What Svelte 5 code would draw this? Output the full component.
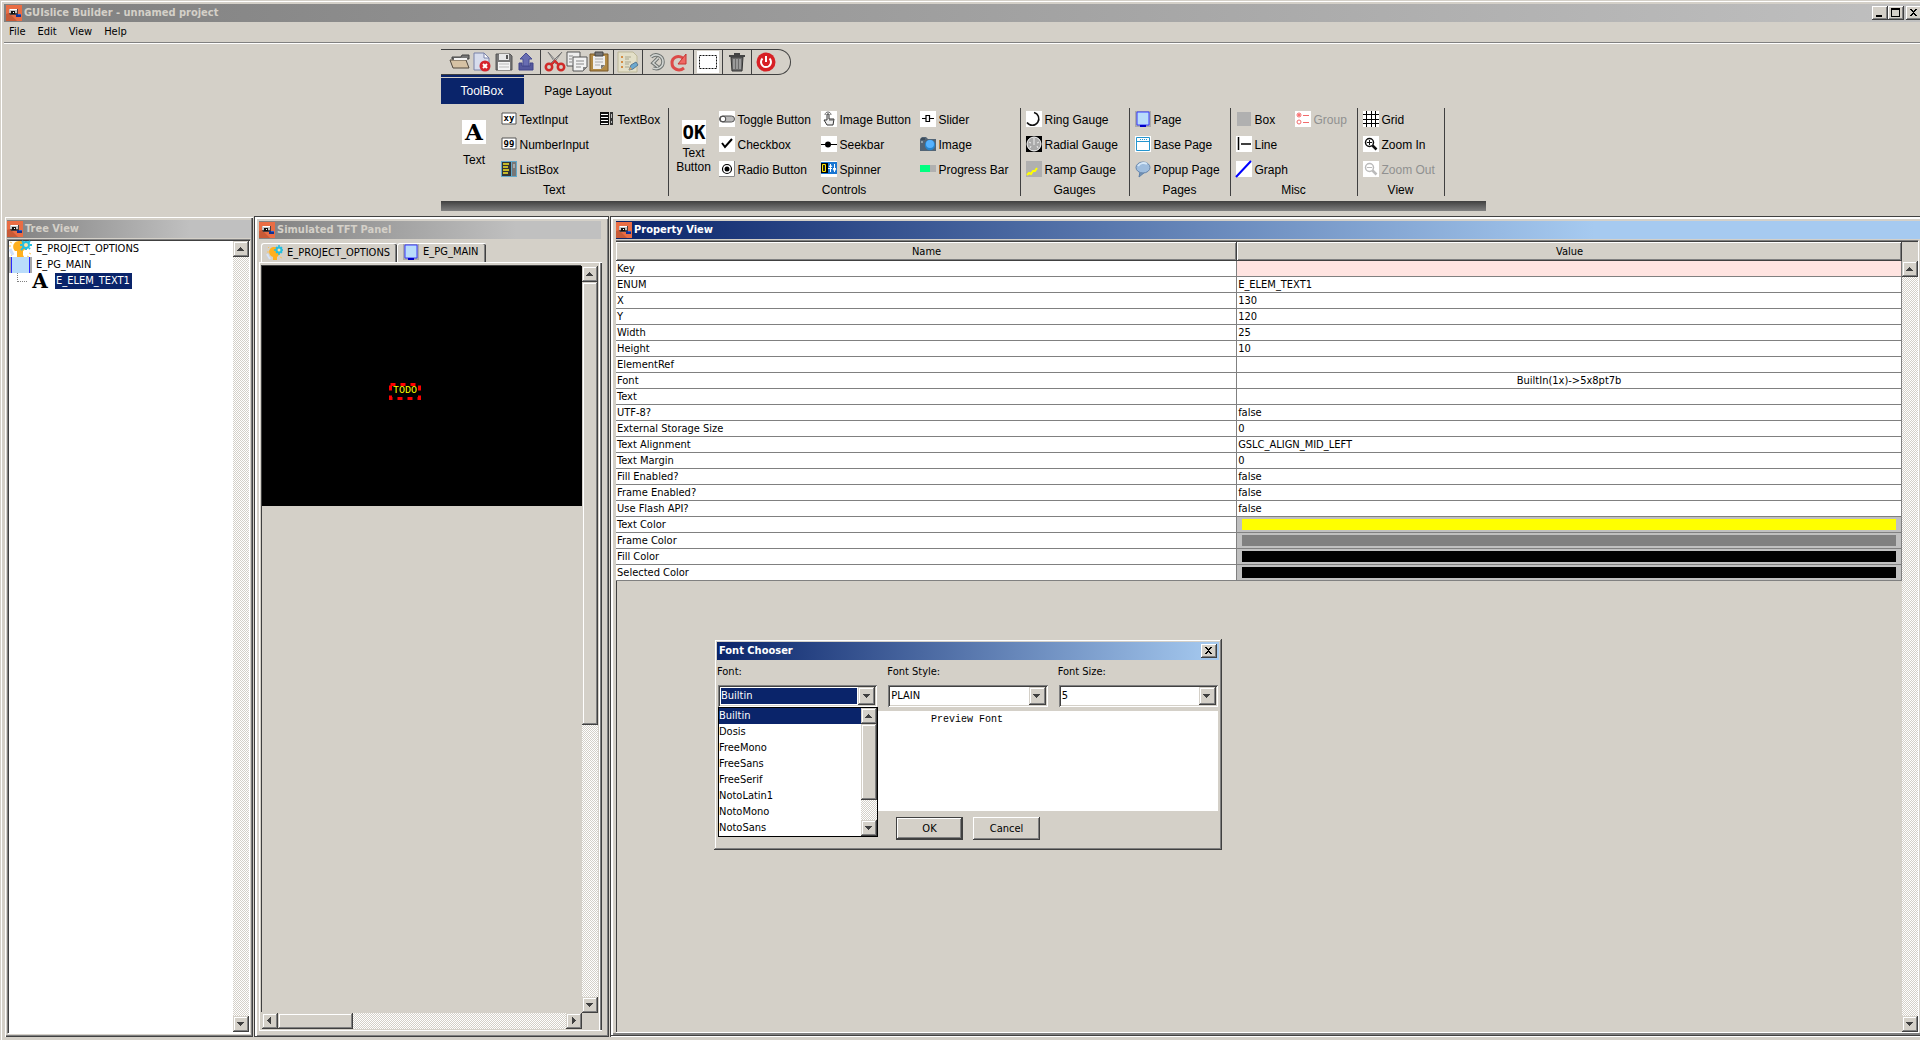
<script>
	let activeTab = $state('ToolBox')
	let font = $state('Builtin')
	let fontStyle = $state('PLAIN')
	let fontSize = $state('5')

	const menus = ['File', 'Edit', 'View', 'Help']

	const toolbar = [
		['open', 'close', 'save', 'export'],
		['cut', 'copy', 'paste'],
		['properties'],
		['undo', 'redo'],
		['select'],
		['trash'],
		['exit']
	]

	// items run down each column, three to a column
	const groups = [
		{
			name: 'Text', cls: 'g-text', big: { label: 'Text', icon: 'letter' },
			columns: [
				[['TextInput', 'textinput'], ['NumberInput', 'numinput'], ['ListBox', 'listbox']],
				[['TextBox', 'textbox']]
			]
		},
		{
			name: 'Controls', cls: 'g-controls', big: { label: 'Text Button', icon: 'okbtn' },
			columns: [
				[['Toggle Button', 'toggle'], ['Checkbox', 'check'], ['Radio Button', 'radio']],
				[['Image Button', 'hand'], ['Seekbar', 'seekbar'], ['Spinner', 'spinner']],
				[['Slider', 'slider'], ['Image', 'camera'], ['Progress Bar', 'progress']]
			]
		},
		{ name: 'Gauges', cls: 'g-gauges', columns: [[['Ring Gauge', 'ring'], ['Radial Gauge', 'radial'], ['Ramp Gauge', 'ramp']]] },
		{ name: 'Pages', cls: 'g-pages', columns: [[['Page', 'page'], ['Base Page', 'basepage'], ['Popup Page', 'popup']]] },
		{
			name: 'Misc', cls: 'g-misc',
			columns: [
				[['Box', 'box'], ['Line', 'line'], ['Graph', 'graph']],
				[['Group', 'group', true]]
			]
		},
		{ name: 'View', cls: 'g-view', columns: [[['Grid', 'grid'], ['Zoom In', 'zoomin'], ['Zoom Out', 'zoomout', true]]] }
	]

	const properties = [
		{ name: 'Key', value: '', kind: 'key' },
		{ name: 'ENUM', value: 'E_ELEM_TEXT1' },
		{ name: 'X', value: '130' },
		{ name: 'Y', value: '120' },
		{ name: 'Width', value: '25' },
		{ name: 'Height', value: '10' },
		{ name: 'ElementRef', value: '' },
		{ name: 'Font', value: 'BuiltIn(1x)->5x8pt7b', kind: 'center' },
		{ name: 'Text', value: '' },
		{ name: 'UTF-8?', value: 'false' },
		{ name: 'External Storage Size', value: '0' },
		{ name: 'Text Alignment', value: 'GSLC_ALIGN_MID_LEFT' },
		{ name: 'Text Margin', value: '0' },
		{ name: 'Fill Enabled?', value: 'false' },
		{ name: 'Frame Enabled?', value: 'false' },
		{ name: 'Use Flash API?', value: 'false' },
		{ name: 'Text Color', color: '#ffff00' },
		{ name: 'Frame Color', color: '#808080' },
		{ name: 'Fill Color', color: '#000000' },
		{ name: 'Selected Color', color: '#000000' }
	]

	const fonts = ['Builtin', 'Dosis', 'FreeMono', 'FreeSans', 'FreeSerif', 'NotoLatin1', 'NotoMono', 'NotoSans']

	const magnifier = (c, sign) =>
		`<rect width="16" height="16" fill="#fff"/><circle cx="6.5" cy="6.5" r="4" fill="none" stroke="${c}" stroke-width="1.5"/><path d="M9.5 9.5l4 4" stroke="${c}" stroke-width="2.5"/><path d="${sign}" stroke="${c}"/>`

	const icons = {
		app: '<rect width="16" height="16" fill="#e96d44"/><path d="M0 16V9l3-1 8 8z" fill="#c85a36"/><path d="M3 4h9v6H4L3 8z" fill="#4a4040"/><path d="M3 4h8v4H3z" fill="#c4c4c4"/><path d="M4 4h7v1H4z" fill="#fff"/><path d="M5 6h4v3H5z" fill="#111"/><path d="M7 7h1v1H7z" fill="#fff"/><path d="M10 9h5v3h-5z" fill="#14318f"/><path d="M12 9h3v1h-3z" fill="#2a62d0"/>',
		open: '<path d="M3 6h9l1-2h7v4H3z" fill="#777" stroke="#444"/><path d="M1 9h16l3 8H4z" fill="#d6c2a4" stroke="#50483e"/><path d="M5 7h13v2H5z" fill="#f4f4f4"/>',
		close: '<path d="M3 2h10l5 5v12H3z" fill="#d7dcec" stroke="#7881a8"/><path d="M13 2v5h5z" fill="#fff" stroke="#7881a8"/><circle cx="14" cy="15" r="5.5" fill="#d6232c"/><path d="M12 13l4 4m0-4l-4 4" stroke="#fff" stroke-width="2"/>',
		save: '<path d="M3 3h14l2 2v14H3z" fill="#777" stroke="#555"/><path d="M6 3h10v6H6z" fill="#e8e8e8"/><path d="M13 4h2v4h-2z" fill="#555"/><path d="M5 11h12v8H5z" fill="#f4f4f4"/><path d="M6 13h10m-10 3h10" stroke="#bbb"/>',
		export: '<path d="M4 12v7h14v-7h-3v3H7v-3z" fill="#55599d" stroke="#40458a"/><path d="M11 2l6 6h-3v7H8V8H5z" fill="#686db1" stroke="#464c91"/>',
		cut: '<path d="M4 1l8 12 2-1zM18 1l-9 12-2-1z" fill="#eee" stroke="#777"/><circle cx="5" cy="16" r="3.2" fill="none" stroke="#d02a28" stroke-width="2.5"/><circle cx="17" cy="16" r="3.2" fill="none" stroke="#d02a28" stroke-width="2.5"/><path d="M7 14l4-4 4 4" fill="none" stroke="#d02a28" stroke-width="2"/>',
		copy: '<path d="M1 1h13v14H1z" fill="#eee" stroke="#555"/><path d="M7 6h14v10l-4 4H7z" fill="#f2f2f2" stroke="#555"/><path d="M3 5h4m-4 3h3m-3 3h3M10 10h8m-8 3h8m-8 3h5" stroke="#888"/><path d="M21 16h-4v4z" fill="#888"/>',
		paste: '<path d="M2 3h18v17H2z" fill="#b28a45" stroke="#79582a"/><path d="M5 5h12v9l-4 4H5z" fill="#eee"/><path d="M7 1h8v4H7z" fill="#777" stroke="#444"/><path d="M7 8h8m-8 3h8m-8 3h5" stroke="#aaa"/><path d="M17 14h-4v4z" fill="#777"/>',
		properties: '<path d="M1 1h15l4 4v16H1z" fill="#e3dfc8" stroke="#bdb798"/><path d="M4 6h2m-2 5h2m-2 5h2" stroke="#d48d45" stroke-width="2"/><path d="M8 6h6m-6 2h4m-4 3h6m-6 2h4m-4 3h4" stroke="#aaa78f"/><path d="M12 19l2-5 5-3 2 3-5 4z" fill="#6da9cf" stroke="#557895"/><path d="M12 19l1-3 2 2z" fill="#e2a35b"/>',
		undo: '<path d="M5 6c4-4 12-2 12 5 0 5-5 8-10 6M12 7l-5 5 5 4" fill="none" stroke="#6d7270" stroke-width="3.5"/><path d="M5 6c4-4 12-2 12 5 0 5-5 8-10 6M12 7l-5 5 5 4" fill="none" stroke="#d2d5d2" stroke-width="1.5"/>',
		redo: '<path d="M16 17c-5 4-12 1-12-5s6-8 11-5" fill="none" stroke="#dc4a48" stroke-width="3"/><path d="M10 13h8V3z" fill="#ef6864" stroke="#c73532"/>',
		select: '<rect width="22" height="22" fill="#fff"/><rect x="2.5" y="4.5" width="17" height="13" fill="none" stroke="#111" stroke-dasharray="2 1"/>',
		trash: '<path d="M5 6h12l-1 14H6z" fill="#6a6a6a" stroke="#333"/><path d="M3 4h16v2H3zM8 2h6v2H8z" fill="#444"/><path d="M8 8v10m3-10v10m3-10v10" stroke="#aaa" stroke-width="1.5"/>',
		exit: '<circle cx="11" cy="11" r="9.5" fill="#d72025"/><path d="M7.5 7.5a5 5 0 1 0 7 0M11 5v6" fill="none" stroke="#fff" stroke-width="2"/>',
		letter: '<rect width="24" height="24" fill="#fff"/><text x="12" y="20" text-anchor="middle" font-family="DejaVu Serif" font-weight="bold" font-size="23">A</text>',
		okbtn: '<rect width="24" height="24" fill="#fff"/><text x="12" y="19" text-anchor="middle" font-family="DejaVu Sans Mono" font-weight="bold" font-size="19">OK</text>',
		textinput: '<path d="M1 2h14v11H1z" fill="#fff" stroke="#555"/><text x="8" y="10" text-anchor="middle" font-family="DejaVu Sans Mono" font-weight="bold" font-size="9">xy</text>',
		numinput: '<path d="M1 2h14v11H1z" fill="#fff" stroke="#555"/><text x="8" y="11" text-anchor="middle" font-family="DejaVu Sans Mono" font-weight="bold" font-size="9">99</text>',
		listbox: '<rect width="16" height="16" fill="#62a8ca"/><path d="M1 1h9v14H1z" fill="#333"/><path d="M2 3h6M2 6h5M2 9h6M2 12h5" stroke="#f5e629" stroke-width="1.5"/><path d="M11 1h4v14h-4z" fill="#777"/><path d="M12 3h2v4h-2z" fill="#aaa"/>',
		textbox: '<path d="M1 1h9v13H1z" fill="#111"/><path d="M2 3.500h7M2 6.500h7M2 9.500h7M2 12.500h7" stroke="#fff"/><path d="M11 1h3v13h-3z" fill="#333"/><path d="M12 3h1v4h-1zM12 10h1v2h-1z" fill="#bbb"/>',
		toggle: '<rect width="16" height="16" fill="#fff"/><rect x=".5" y="5" width="15" height="6" rx="3" fill="#bbb" stroke="#555"/><circle cx="4" cy="8" r="2.8" fill="#fff" stroke="#444"/>',
		check: '<rect width="16" height="16" fill="#fff"/><path d="M3 7l3 4 7-8" fill="none" stroke="#000" stroke-width="2"/>',
		radio: '<rect width="16" height="16" fill="#fff"/><path d="M15.5 0v15.5H0" fill="none" stroke="#888"/><circle cx="8" cy="8" r="4.5" fill="none" stroke="#000" stroke-width="1.2"/><circle cx="8" cy="8" r="2.5"/>',
		hand: '<rect width="16" height="16" fill="#fff"/><path d="M6 9V3h2v5h5l-1 6H6L3 9z" fill="#eee" stroke="#333"/><path d="M4 4c0-4 6-4 6 0" fill="none" stroke="#666"/><path d="M9 8v2m2-2v2" stroke="#555"/>',
		seekbar: '<rect width="16" height="16" fill="#fff"/><path d="M0 8.5h16" stroke="#000"/><circle cx="7" cy="8.5" r="3"/>',
		spinner: '<path d="M0 0h16v16H0z" fill="#fff"/><path d="M0 1h16v12H0z" fill="#1976d2"/><path d="M0 2h7v10H0z" fill="#000"/><path d="M1.500 3.500h3v7h-3z" fill="#222" stroke="#fce700"/><path d="M9.500 3v8M8 6l1.500-2L11 6M13.500 3v8M12 8l1.500 2L15 8M7 7.500h4m1 0h3" fill="none" stroke="#fff"/>',
		slider: '<rect width="16" height="16" fill="#fff"/><path d="M2 7.500h4m4 0h4M6 4.500h3.500v6H6z" fill="none" stroke="#000" stroke-width="1.200"/>',
		camera: '<path d="M0 3l2-2h4l2 2h8v12H0z" fill="#526475"/><path d="M1 2h4v2H1z" fill="#3d4d5b"/><circle cx="10" cy="9" r="5.200" fill="#2784cc"/><circle cx="10" cy="8" r="4" fill="#55b2ff"/><path d="M1 5h2v2H1z" fill="#91a1ab"/>',
		progress: '<path d="M0 4h10v7H0z" fill="#00ff80"/><path d="M10 4h6v7h-6z" fill="#b0b0b0"/>',
		ring: '<rect width="16" height="16" fill="#fff"/><path d="M8 1.500a6.500 6.500 0 1 1-7 10" fill="none" stroke="#111" stroke-width="1.500"/>',
		radial: '<rect width="16" height="16"/><circle cx="8" cy="8" r="7" fill="#aaa" stroke="#fff"/><path d="M8 2v7M3 6l2 1m8-1l-2 1M4 12l1-2m7 2l-1-2" stroke="#eee"/>',
		ramp: '<rect width="16" height="16" fill="#b0b0b0"/><path d="M1 14l2-2 2 1 2-3 2 0 2-3" fill="none" stroke="#ffff00" stroke-width="2"/>',
		page: '<rect width="16" height="16" fill="#aaa"/><path d="M2 1h12v13H2z" fill="#b9dcfb" stroke="#3b3bff"/><path d="M5 14h6v2H5z" fill="#0000c8"/>',
		basepage: '<rect width="16" height="16" fill="#fff"/><path d="M1.500 1.500h13v13h-13zM2 5.500h12" fill="none" stroke="#2595ce"/><path d="M5 3.500h8" stroke="#2595ce" stroke-dasharray="1 1"/>',
		popup: '<path d="M5 11l-1 5 6-5" fill="#7494b6" stroke="#5d7fa7"/><ellipse cx="8" cy="6.500" rx="7" ry="5.500" fill="#9fbddd" stroke="#6685aa"/><path d="M3 5c2-3 6-4 9-2" fill="none" stroke="#d5e7f7" stroke-width="2"/>',
		box: '<path d="M1 1h14v14H1z" fill="#b0b0b0"/>',
		line: '<rect width="16" height="16" fill="#fff"/><path d="M2.500 1v13M5 8h10" stroke="#000" stroke-width="1.500"/>',
		graph: '<rect width="16" height="16" fill="#fff"/><path d="M0 16L15 0" stroke="#0000ff" stroke-width="2"/>',
		group: '<rect width="16" height="16" fill="#fff"/><g fill="none" stroke="#f26b6b"><circle cx="4" cy="4" r="2"/><circle cx="4" cy="11" r="2"/><path d="M8 4.500h6M8 11.500h6"/></g><circle cx="4" cy="4" r="1" fill="#f44"/>',
		grid: '<rect width="16" height="16" fill="#fff"/><path d="M3.500 0v16M8.500 0v16M12.500 0v16M0 3.500h16M0 8.500h16M0 12.500h16" stroke="#000"/>',
		zoomin: magnifier('#111', 'M4 6.5h5M6.500 4v5'),
		zoomout: magnifier('#bbb', 'M4 6.500h5'),
		bulb: '<path d="M4 11C0 7 3 1 8 2c6 0 6 7 2 10v3H6v-3z" fill="#ffb01f"/><path d="M1 2l1 1M0 7h2M1 12l2-1m10 1l2 1" stroke="#ffc35a"/><path d="M0 9l3 5" stroke="#d4e3fb" stroke-width="2"/><circle cx="12" cy="5" r="2.500" fill="#ffe3a4" stroke="#24bfe0" stroke-width="2"/><path d="M12 0v2m0 6v2M7 5h2m6 0h1M9 2l1 1m4 4l1 1m0-6l-1 1M9 8l1-1" stroke="#24bfe0" stroke-width="1.500"/>',
		treebulb: '<path d="M6 10C2 6 5-1 11 0c8 0 8 7 3 10v4l1 2H8v-6z" fill="#ffb01f"/><path d="M1 1l2 1M0 5h2m0 10l2-3m16 0l2 1m-4 2l2 1" stroke="#ffc35a"/><path d="M1 8l3 6" stroke="#cfe1fb" stroke-width="3"/><circle cx="17" cy="4" r="3" fill="#ffe3a4" stroke="#24bfe0" stroke-width="2"/><path d="M17 0v1m0 6v2M11 4h2m8 0h2M13 0l2 2m5 5l1 1m0-8l-2 2M12 9l3-3" stroke="#24bfe0" stroke-width="2"/>',
		treepage: '<rect width="23" height="16" fill="#aaa"/><path d="M2 0h19v16H2z" fill="#b9dcfb"/><path d="M2.500 0v16M20.500 0v16" stroke="#2a2aff"/>',
		treeletter: '<text x="12" y="15" text-anchor="middle" font-family="DejaVu Serif" font-weight="bold" font-size="20">A</text>',
		up: '<path d="M7 6h1v1h1v1h1v1h1v1H4V9h1V8h1V7h1z" fill="#404040"/>',
		down: '<path d="M4 6h7v1h-1v1H9v1H8v1H7V9H6V8H5V7H4z" fill="#404040"/>',
		left: '<path d="M9 4v7H8v-1H7V9H6V8H5V7h1V6h1V5h1V4z" fill="#404040"/>',
		right: '<path d="M6 4v7h1v-1h1V9h1V8h1V7H9V6H8V5H7V4z" fill="#404040"/>',
		min: '<path d="M4 9h6v2H4z"/>',
		max: '<path d="M3 2h9v9H3zm1 2v6h7V4z" fill-rule="evenodd"/>',
		x: '<path d="M4 3h2v1h1v1h1V4h1V3h2v1h-1v1H9v1H8v1h1v1h1v1h1v1H9V9H8V8H7v1H6v1H4V9h1V8h1V7h1V6H6V5H5V4H4z"/>'
	}
</script>

{#snippet icon(name, w = 16, h = 16)}
	<svg width={w} height={h} viewBox="0 0 {w} {h}" aria-hidden="true">{@html icons[name]}</svg>
{/snippet}

{#snippet vbar(thumb)}
	<div class="vbar">
		<button class="sbtn" aria-label="Scroll up">{@render icon('up')}</button>
		<div class="track">
			{#if thumb}<div class="thumb" style="height: {thumb}%"></div>{/if}
		</div>
		<button class="sbtn" aria-label="Scroll down">{@render icon('down')}</button>
	</div>
{/snippet}

<div class="window">
	<header class="title main-title">
		{@render icon('app')}
		<h1>GUIslice Builder - unnamed project</h1>
		<button class="wbtn" aria-label="Minimize">{@render icon('min', 16, 14)}</button>
		<button class="wbtn" aria-label="Maximize">{@render icon('max', 16, 14)}</button>
		<button class="wbtn last" aria-label="Close">{@render icon('x', 16, 14)}</button>
	</header>

	<nav class="menubar">
		{#each menus as menu}
			<button>{menu}</button>
		{/each}
	</nav>

	<section class="ribbon">
		<div class="toolbar">
			{#each toolbar as set, i}
				{#if i > 0}<span class="sep"></span>{/if}
				{#each set as tool}
					<button aria-label={tool}>{@render icon(tool, 22, 22)}</button>
				{/each}
			{/each}
		</div>
		<div class="ribbon-tabs">
			{#each ['ToolBox', 'Page Layout'] as tab}
				<button class:active={activeTab === tab} onclick={() => (activeTab = tab)}>{tab}</button>
			{/each}
		</div>
		<div class="groups">
			{#each groups as group}
				<div class="group {group.cls}">
					<div class="tools">
						{#if group.big}
							<button class="big">
								{@render icon(group.big.icon, 24, 24)}
								<span>{group.big.label}</span>
							</button>
						{/if}
						{#each group.columns as column}
							<div class="column">
								{#each column as [label, name, disabled]}
									<button class="tool" {disabled}>{@render icon(name)}<span>{label}</span></button>
								{/each}
							</div>
						{/each}
					</div>
					<div class="caption">{group.name}</div>
				</div>
			{/each}
		</div>
		<div class="ribbon-foot"></div>
	</section>

	<main>
		<section class="panel tree">
			<div class="title">{@render icon('app')}<h2>Tree View</h2></div>
			<div class="sunken">
				<ul>
					<li>{@render icon('treebulb', 23, 16)}<span>E_PROJECT_OPTIONS</span></li>
					<li>{@render icon('treepage', 23, 16)}<span>E_PG_MAIN</span></li>
					<li class="child">
						<i></i>{@render icon('treeletter', 23, 16)}<span class="selected">E_ELEM_TEXT1</span>
					</li>
				</ul>
				{@render vbar(0)}
			</div>
		</section>

		<section class="panel tft">
			<div class="title">{@render icon('app')}<h2>Simulated TFT Panel</h2></div>
			<div class="tabs">
				<button>{@render icon('bulb')}<span>E_PROJECT_OPTIONS</span></button>
				<button class="front">{@render icon('page')}<span>E_PG_MAIN</span></button>
			</div>
			<div class="pane">
				<div class="viewport">
					<div class="screen">
						<div class="element">
							<svg width="32" height="17" aria-hidden="true">
								<rect x="1.5" y="1.5" width="29" height="14" fill="none" stroke="#f00" stroke-width="3" stroke-dasharray="5 5" />
							</svg>
							<span>TODO</span>
						</div>
					</div>
				</div>
				{@render vbar(62)}
				<div class="hbar">
					<button class="sbtn" aria-label="Scroll left">{@render icon('left')}</button>
					<div class="track"><div class="thumb" style="width: 26%"></div></div>
					<button class="sbtn" aria-label="Scroll right">{@render icon('right')}</button>
				</div>
			</div>
		</section>

		<section class="panel props">
			<div class="title active">{@render icon('app')}<h2>Property View</h2></div>
			<div class="sunken">
				<div class="table-area">
					<table>
						<thead>
							<tr><th class="name">Name</th><th>Value</th></tr>
						</thead>
						<tbody>
							{#each properties as prop}
								<tr>
									<td>{prop.name}</td>
									{#if prop.color}
										<td class="color"><div style="background: {prop.color}"></div></td>
									{:else}
										<td class={prop.kind}>{prop.value}</td>
									{/if}
								</tr>
							{/each}
						</tbody>
					</table>
				</div>
				{@render vbar(0)}
			</div>
		</section>
	</main>

	<div class="dialog" role="dialog" aria-labelledby="chooser">
		<div class="title">
			<h2 id="chooser">Font Chooser</h2>
			<button class="wbtn" aria-label="Close">{@render icon('x', 16, 14)}</button>
		</div>
		<div class="fields">
			<div class="field">
				<label for="font">Font:</label>
				<div class="combo focused">
					<select id="font" bind:value={font}>
						{#each fonts as f}<option>{f}</option>{/each}
					</select>
					<span class="arrow">{@render icon('down')}</span>
				</div>
			</div>
			<div class="field">
				<label for="style">Font Style:</label>
				<div class="combo">
					<select id="style" bind:value={fontStyle}>
						<option>PLAIN</option>
					</select>
					<span class="arrow">{@render icon('down')}</span>
				</div>
			</div>
			<div class="field">
				<label for="size">Font Size:</label>
				<div class="combo">
					<select id="size" bind:value={fontSize}>
						<option>5</option>
					</select>
					<span class="arrow">{@render icon('down')}</span>
				</div>
			</div>
		</div>
		<div class="preview">Preview Font</div>
		<div class="actions">
			<button class="default">OK</button>
			<button>Cancel</button>
		</div>
		<div class="popup">
			<div class="options" role="listbox" aria-label="Font">
				{#each fonts as f}
					<button role="option" aria-selected={f === font} onclick={() => (font = f)}>{f}</button>
				{/each}
			</div>
			{@render vbar(79)}
		</div>
	</div>
</div>

<style>
	:global(body) {
		background: #d4d0c8;
	}

	.window {
		position: relative;
		display: flex;
		flex-direction: column;
		height: 100vh;
		min-height: 880px;
		box-sizing: border-box;
		padding: 4px 0 3px 4px;
		overflow: hidden;
		background: #d4d0c8;
		box-shadow: inset 1px 1px #d4d0c8, inset 2px 2px #fff;
		font-family: "DejaVu Sans Condensed", "DejaVu Sans", sans-serif;
		font-size: 11px;
		line-height: 16px;
		color: #000;
	}

	button, select {
		margin: 0;
		padding: 0;
		border: 0;
		background: none;
		font: inherit;
		color: inherit;
	}

	svg {
		display: block;
		flex: none;
		overflow: visible;
	}

	h1, h2 {
		flex: 1;
		margin: 0;
		font-size: 11px;
		font-weight: bold;
		line-height: 18px;
		white-space: nowrap;
	}

	.title {
		display: flex;
		align-items: center;
		gap: 2px;
		height: 18px;
		flex: none;
		color: #d4d0c8;
		background: linear-gradient(90deg, #808080, #c0c0c0 75%);
	}

	.title.active {
		color: #fff;
		background: linear-gradient(90deg, #0a246a, #a6caf0 75%);
	}

	.main-title {
		gap: 0;
		padding-left: 2px;
		margin-right: -2px;
		background: linear-gradient(90deg, #808080, #c0c0c0);
	}

	.main-title h1 {
		padding-left: 2px;
	}

	.wbtn, .sbtn, .thumb, .arrow {
		background: #d4d0c8;
		box-shadow: inset -1px -1px #404040, inset 1px 1px #d4d0c8, inset -2px -2px #808080, inset 2px 2px #fff;
	}

	.wbtn {
		width: 16px;
		height: 14px;
		box-shadow: inset -1px -1px #404040, inset 1px 1px #fff, inset -2px -2px #808080;
	}

	.wbtn.last {
		margin-left: 2px;
	}

	.menubar {
		display: flex;
		gap: 12px;
		flex: none;
		height: 20px;
		padding-left: 5px;
		border-bottom: 1px solid #808080;
		box-shadow: 0 1px #fff;
	}

	.ribbon {
		flex: none;
		align-self: center;
		width: 1045px;
		margin: 6px 0 5px 2px;
		font-family: "Liberation Sans", Arial, sans-serif;
		font-size: 12px;
	}

	.toolbar {
		display: flex;
		align-items: center;
		width: max-content;
		height: 26px;
		box-sizing: border-box;
		padding: 0 13px 0 8px;
		border: solid #404040;
		border-width: 1px 1px 1px 0;
		border-radius: 0 13px 13px 0;
	}

	.sep {
		width: 1px;
		height: 24px;
		margin: 0 3px;
		background: #404040;
	}

	.ribbon-tabs {
		display: flex;
		height: 29px;
	}

	.ribbon-tabs button {
		padding: 1px 21px 0 20px;
		line-height: 30px;
	}

	.ribbon-tabs .active {
		color: #fff;
		background: linear-gradient(#0a246a 2px, #d4d0c8 2px 3px, #0a246a 3px);
	}

	.groups {
		display: flex;
		margin: 4px 0 5px;
	}

	.group {
		box-sizing: border-box;
		height: 88px;
		border-right: 1px solid #404040;
	}

	.tools {
		display: grid;
		height: 75px;
	}

	.g-text {
		width: 228px;
	}

	.g-text .tools {
		padding-left: 7px;
		grid-template-columns: 53px 98px 1fr;
	}

	.g-controls {
		width: 352px;
	}

	.g-controls .tools {
		grid-template-columns: 50px 102px 99px 1fr;
	}

	.g-gauges {
		width: 109px;
	}

	.g-pages {
		width: 101px;
	}

	.g-misc {
		width: 127px;
	}

	.g-view {
		width: 87px;
	}

	.g-gauges .tools, .g-pages .tools, .g-misc .tools, .g-view .tools {
		padding-left: 5px;
	}

	.g-misc .tools {
		grid-template-columns: 59px 1fr;
	}

	.big {
		display: flex;
		flex-direction: column;
		align-items: center;
		padding-top: 12px;
		line-height: 14px;
	}

	.big span {
		display: flex;
		align-items: center;
		height: 32px;
	}

	.tool {
		display: flex;
		align-items: flex-start;
		gap: 3px;
		height: 25px;
		padding-top: 3px;
		line-height: 18px;
		white-space: nowrap;
	}

	.tool:disabled {
		color: #909090;
	}

	.caption {
		line-height: 15px;
		text-align: center;
	}

	.ribbon-foot {
		height: 10px;
		background: linear-gradient(#404040, #808080);
	}

	main {
		display: grid;
		grid-template-columns: 248px 355px 1fr;
		gap: 1px;
		flex: 1;
		min-height: 0;
		padding-left: 1px;
	}

	.panel {
		display: flex;
		flex-direction: column;
		min-width: 0;
		min-height: 0;
		box-sizing: border-box;
		padding: 4px 2px 3px;
		box-shadow: inset 0 1px #d4d0c8, inset 1px 2px #fff, inset -1px -1px #404040, inset -2px -2px #808080;
	}

	.tft {
		padding: 5px 8px 6px 5px;
		box-shadow: inset 1px 1px #404040, inset -1px -1px #404040, inset 3px 3px #fff, inset -2px -2px #808080;
	}

	.props {
		padding: 5px 0 4px 6px;
		box-shadow: inset 1px 1px #404040, inset 0 -1px #fff, inset 0 -2px #404040, inset 3px 3px #fff, inset 0 -4px #808080;
	}

	.sunken {
		display: flex;
		flex: 1;
		min-height: 0;
		margin-top: 1px;
		border: 1px solid #808080;
		border-right-color: #fff;
		border-bottom-color: #fff;
		box-shadow: inset 1px 1px #404040;
	}

	.tree .sunken {
		padding: 1px;
		background: #fff;
		border-right-color: #d4d0c8;
	}

	.props .sunken {
		padding-top: 1px;
		margin-right: 1px;
		border-left: 0;
	}

	ul {
		flex: 1;
		margin: 0;
		padding: 0;
		list-style: none;
	}

	li {
		display: flex;
		gap: 4px;
		height: 16px;
	}

	li i {
		width: 9px;
		height: 8px;
		margin: 0 1px 0 8px;
		border: dotted #808080;
		border-width: 0 0 1px 1px;
	}

	.child {
		gap: 0;
	}

	.selected {
		margin-left: 4px;
		padding: 0 2px 0 1px;
		color: #fff;
		background: #0a246a;
	}

	.vbar {
		display: flex;
		flex-direction: column;
		flex: none;
		width: 16px;
	}

	.hbar {
		display: flex;
		height: 16px;
	}

	.track {
		flex: 1;
		background: repeating-conic-gradient(#fff 0 25%, #d4d0c8 0 50%) 0 0 / 2px 2px;
	}

	.vbar .thumb {
		width: 16px;
	}

	.hbar .thumb {
		height: 16px;
	}

	.sbtn {
		flex: none;
		width: 16px;
		height: 16px;
	}

	.tabs {
		display: flex;
		flex: none;
		align-items: flex-end;
		height: 19px;
		margin: 4px 0 0 2px;
	}

	.tabs button {
		display: flex;
		align-items: center;
		gap: 4px;
		height: 19px;
		padding: 0 7px 0 5px;
		border-radius: 3px 2px 0 0;
		border-top: 1px solid #fff;
		border-left: 1px solid #fff;
		box-shadow: inset -1px 0 #404040, inset -2px 0 #808080;
	}

	.tabs .front {
		padding-bottom: 2px;
	}

	.pane {
		display: grid;
		grid-template-columns: 1fr 16px;
		grid-template-rows: 1fr 16px;
		flex: 1;
		min-height: 0;
		margin-right: -1px;
		padding: 3px 4px 1px 2px;
		border: solid #fff;
		border-width: 1px 0 1px 1px;
		box-shadow: inset -1px 0 #404040, inset -2px 0 #808080, inset -3px 0 #fff;
	}

	.viewport {
		min-height: 0;
		overflow: hidden;
		box-shadow: -1px -1px #404040;
	}

	.screen {
		position: relative;
		width: 320px;
		height: 240px;
		background: #000;
	}

	.element {
		position: absolute;
		left: 127px;
		top: 117px;
	}

	.element span {
		position: absolute;
		left: 4px;
		top: 0;
		font-family: "Liberation Mono", monospace;
		font-size: 10px;
		line-height: 16px;
		color: #ff0;
	}

	.table-area {
		flex: 1;
		min-width: 0;
	}

	.props .vbar {
		margin-top: 19px;
	}

	table {
		width: 100%;
		table-layout: fixed;
		border-collapse: separate;
		border-spacing: 0;
	}

	th {
		height: 19px;
		padding: 0;
		box-sizing: border-box;
		font-weight: normal;
		box-shadow: inset -1px -1px #404040, inset 1px 1px #fff, inset -2px -2px #808080;
	}

	th.name {
		width: 48.3%;
	}

	td {
		height: 16px;
		box-sizing: border-box;
		padding: 0 1px;
		border: solid #808080;
		border-width: 0 1px 1px 0;
		line-height: 15px;
		background: #fff;
	}

	td.key {
		background: #ffe4e1;
	}

	td.center {
		text-align: center;
	}

	td.color {
		padding: 2px 5px;
		background: #c0c0c0;
	}

	td.color div {
		height: 11px;
	}

	.dialog {
		position: absolute;
		left: 714px;
		top: 639px;
		box-sizing: border-box;
		width: 508px;
		height: 211px;
		padding: 3px;
		background: #d4d0c8;
		box-shadow: inset -1px -1px #404040, inset 1px 1px #d4d0c8, inset -2px -2px #808080, inset 2px 2px #fff;
	}

	.dialog .title {
		padding: 0 2px;
		color: #fff;
		background: linear-gradient(90deg, #0a246a, #a6caf0);
	}

	.dialog .wbtn {
		color: #000;
	}

	.fields {
		display: grid;
		grid-template-columns: repeat(3, 1fr);
		gap: 10px;
		padding: 4px 1px 0 0;
	}

	.field label {
		display: block;
		margin-bottom: 5px;
	}

	.combo {
		display: flex;
		box-sizing: border-box;
		height: 22px;
		margin-left: 1px;
		padding: 2px;
		background: #fff;
		box-shadow: inset 1px 1px #808080, inset -1px -1px #fff, inset 2px 2px #404040, inset -2px -2px #d4d0c8;
	}

	.combo select {
		flex: 1;
		min-width: 0;
		appearance: none;
		margin: 1px;
		outline: 0;
	}

	.focused select {
		color: #fff;
		background: #0a246a;
	}

	.arrow {
		display: flex;
		align-items: center;
		justify-content: center;
		width: 17px;
		pointer-events: none;
	}

	.preview {
		height: 100px;
		margin: 4px 1px 6px;
		padding-left: 213px;
		background: #fff;
		font-family: "Liberation Mono", monospace;
		font-size: 10px;
		line-height: 18px;
	}

	.actions {
		display: flex;
		gap: 10px;
		padding-left: 179px;
	}

	.actions button {
		width: 67px;
		height: 23px;
		box-shadow: inset -1px -1px #404040, inset 1px 1px #fff, inset -2px -2px #808080;
	}

	.actions .default {
		box-shadow: inset 0 0 0 1px #404040, inset -2px -2px #404040, inset 2px 2px #fff, inset -3px -3px #808080;
	}

	.popup {
		position: absolute;
		left: 4px;
		top: 68px;
		display: flex;
		box-sizing: border-box;
		width: 160px;
		border: 1px solid #000;
		background: #fff;
	}

	.options {
		display: flex;
		flex-direction: column;
		flex: 1;
	}

	.options button {
		height: 16px;
		text-align: left;
	}

	.options [aria-selected="true"] {
		color: #fff;
		background: #0a246a;
	}
</style>
